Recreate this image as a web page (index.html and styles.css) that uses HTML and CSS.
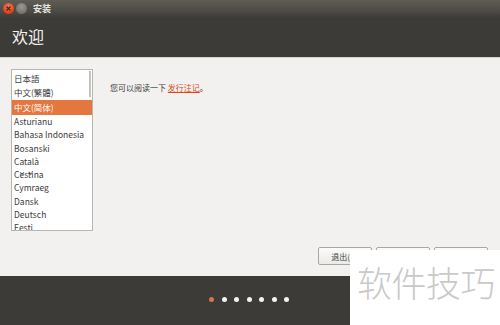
FILE: index.html
```html
<!DOCTYPE html>
<html>
<head>
<meta charset="utf-8">
<link rel="stylesheet" href="styles.css">
</head>
<body>
<div class="window">
  <div class="titlebar">
    <span class="wbtn close"><svg width="11" height="11" viewBox="0 0 11 11"><path d="M3.5 3.5 L7.5 7.5 M7.5 3.5 L3.5 7.5" stroke="#5a1d0c" stroke-width="1.2"/></svg></span>
    <span class="wbtn min"></span>
    <span class="title">安装</span>
  </div>
  <div class="header"><h1>欢迎</h1></div>
  <div class="body">
    <div class="main">
      <div class="listbox">
        <ul class="list">
          <li class="cjk">日本語</li>
          <li class="cjk">中文(繁體)</li>
          <li class="sel">中文(简体)</li>
          <li>Asturianu</li>
          <li>Bahasa Indonesia</li>
          <li>Bosanski</li>
          <li>Català</li>
          <li>Čeština</li>
          <li>Cymraeg</li>
          <li>Dansk</li>
          <li>Deutsch</li>
          <li>Eesti</li>
        </ul>
        <span class="scroll"></span>
      </div>
      <p class="info">您可以阅读一下 <a class="link">发行注记</a>。</p>
    </div>
    <div class="buttons">
      <span class="btn">退出(Q)</span>
      <span class="btn"></span>
      <span class="btn"></span>
    </div>
  </div>
  <div class="footer">
    <div class="dots">
      <span class="dot on"></span><span class="dot"></span><span class="dot"></span><span class="dot"></span><span class="dot"></span><span class="dot"></span><span class="dot"></span>
    </div>
  </div>
  <div class="watermark">软件技巧</div>
</div>
</body>
</html>
```
FILE: styles.css
```css
* { box-sizing: border-box; }
html, body { margin: 0; padding: 0; }
body {
  width: 500px;
  height: 325px;
  overflow: hidden;
  font-family: "Noto Sans CJK SC", "Noto Sans", "DejaVu Sans", sans-serif;
  background: #3c3b37;
}
.window {
  position: relative;
  width: 500px;
  height: 325px;
  display: flex;
  flex-direction: column;
}
.titlebar {
  height: 17px;
  background: linear-gradient(#5f5d54, #4a4943 70%, #3e3d39);
  display: flex;
  align-items: center;
  padding-left: 3px;
}
.wbtn {
  width: 11px;
  height: 11px;
  border-radius: 50%;
  margin-right: 2px;
  display: block;
}
.wbtn svg { display: block; }
.close {
  background: radial-gradient(circle at 50% 35%, #f4845c, #e0481e 60%, #b8360f);
}
.min {
  background: radial-gradient(circle at 50% 35%, #9a9890, #7a7870 60%, #5e5c56);
}
.title {
  color: #e8e6e0;
  font-size: 9px;
  font-weight: bold;
  margin-left: 4px;
  line-height: 17px;
}
.header {
  height: 40px;
  background: #3c3b37;
  padding-left: 12px;
  display: flex;
  align-items: center;
}
.header h1 {
  margin: 0;
  font-size: 16px;
  font-weight: normal;
  color: #f2f1ee;
  line-height: 1;
  margin-top: -2px;
}
.body {
  height: 219px;
  background: #f2f1f0;
  border-top: 1px solid #d6d4d0;
  display: flex;
  flex-direction: column;
}
.main {
  display: flex;
  padding: 11px 0 0 11px;
  height: 189px;
}
.listbox {
  position: relative;
  width: 82px;
  height: 162px;
  background: #ffffff;
  border: 1px solid #b8b6b2;
  overflow: hidden;
}
.list {
  list-style: none;
  margin: 0;
  padding: 1px 0 0 0;
}
.list li {
  height: 13.3px;
  line-height: 13.3px;
  font-size: 8.5px;
  color: #3c3c3c;
  padding-left: 2px;
  white-space: nowrap;
  font-family: "Noto Sans CJK SC", "Ubuntu", "DejaVu Sans", sans-serif;
}
.list li.cjk {
  height: 14px;
  line-height: 14px;
}
.list li.sel {
  background: #e4763f;
  color: #ffffff;
  height: 15px;
  line-height: 15px;
  margin: 1px 0 0;
}
.scroll {
  position: absolute;
  right: 1px;
  top: 1px;
  width: 2px;
  height: 26px;
  background: #c4c2be;
}
.info {
  margin: 13px 0 0 17px;
  font-size: 8px;
  color: #3c3c3c;
  line-height: 12px;
}
.link {
  color: #dd4814;
  text-decoration: underline;
}
.buttons {
  display: flex;
  justify-content: flex-end;
  gap: 4px;
  padding-right: 12px;
}
.btn {
  width: 54px;
  height: 18px;
  border: 1px solid #a9a7a3;
  border-radius: 2px;
  background: linear-gradient(#fbfbfa, #ebeae8);
  font-size: 8px;
  color: #3c3c3c;
  display: flex;
  align-items: center;
  justify-content: center;
}
.footer {
  flex: 1;
  background: #3c3b37;
  display: flex;
  justify-content: center;
  padding-top: 21px;
}
.dots {
  display: flex;
  gap: 7.5px;
  margin-left: -2px;
  height: 5px;
}
.dot {
  width: 5px;
  height: 5px;
  border-radius: 50%;
  background: #f4f3f0;
  display: block;
}
.dot.on { background: #d6754c; }
.watermark {
  position: absolute;
  left: 350px;
  top: 250px;
  width: 150px;
  height: 75px;
  background: #ffffff;
  color: #c9c9c9;
  font-size: 35px;
  line-height: 1;
  padding: 14px 0 0 7px;
  letter-spacing: -0.5px;
  white-space: nowrap;
  font-family: "Noto Sans CJK SC", sans-serif;
  font-weight: 300;
}
```
